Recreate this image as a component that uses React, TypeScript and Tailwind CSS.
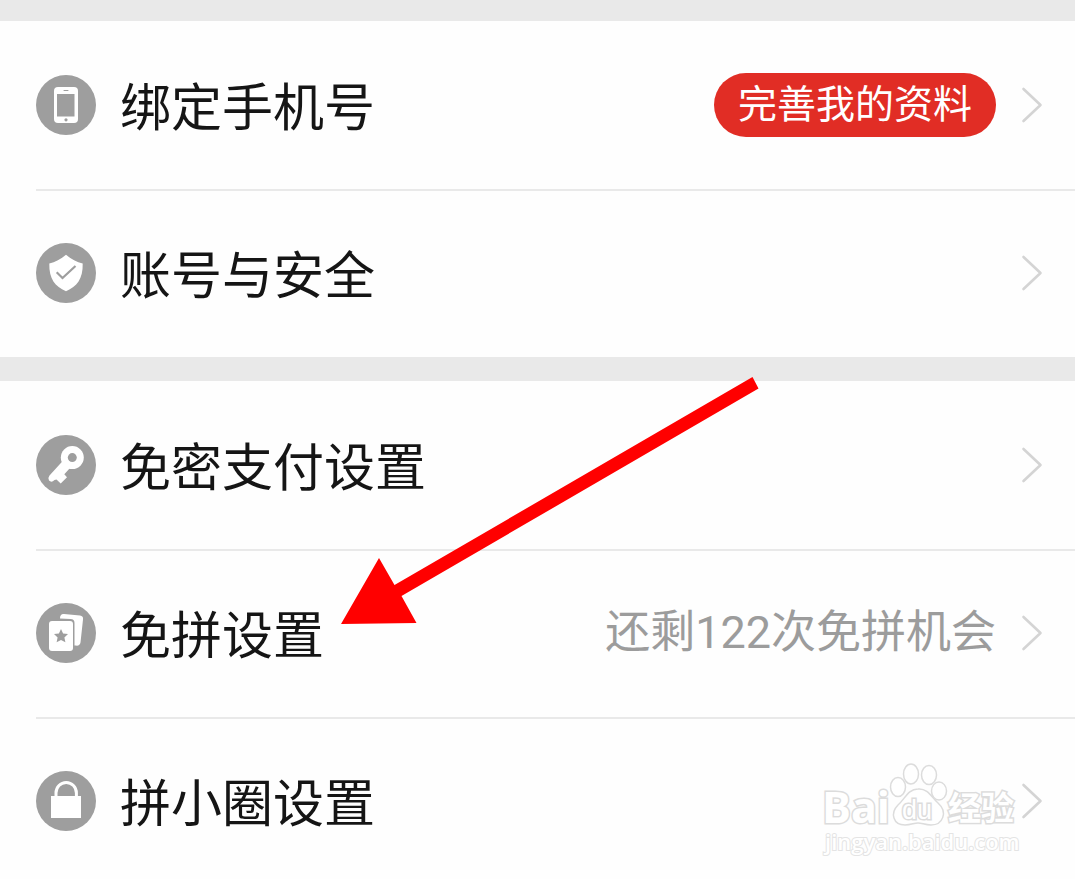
import type { ReactNode } from "react";

type Row = {
  label: string;
  icon: ReactNode;
  action?: string;
  note?: string;
};

const PhoneIcon = () => (
  <>
    <rect x="18" y="12" width="24" height="36" rx="4" fill="#fff" />
    <rect x="21" y="19" width="17.500" height="22.500" fill="#9e9e9e" />
    <path d="M28 15.500h4" stroke="#9e9e9e" strokeWidth="1" strokeLinecap="round" />
    <circle cx="30" cy="44.800" r="1.600" fill="#9e9e9e" />
  </>
);

const ShieldIcon = () => (
  <>
    <path
      d="M30 11.700C25 16 19 19 13.300 20.500C13 36 19 43.500 30 48.200C41 43.500 47 36 46.700 20.500C41 19 35 16 30 11.700Z"
      fill="#fff"
    />
    <path d="M20.700 29.300l5.800 5.700L39.500 23" fill="none" stroke="#9e9e9e" strokeWidth="2.200" />
  </>
);

const KeyIcon = () => (
  <>
    <path
      d="M26.700 26L13.500 40.500Q11.500 43 13 45.500Q15.500 48 18.500 45L20.500 44.500L24.700 48.500L31 42.300L28.300 39.300L34 33Z"
      fill="#fff"
    />
    <circle cx="36.300" cy="22.600" r="11.500" fill="#fff" />
    <circle cx="36.300" cy="22.600" r="4.500" fill="#9e9e9e" />
  </>
);

const CardsIcon = () => (
  <>
    <path
      d="M24 15.500Q24 10.600 28 11L44 12.600Q47.500 13 47 16.500L44.500 39.500Q44 43 40 42.600L38.500 42.500V20Q38.500 16 34.500 16Z"
      fill="#fff"
    />
    <rect x="13" y="18" width="24" height="30" rx="3" fill="#fff" />
    <path
      d="M25 26l2.100 4.500 4.900.6-3.600 3.300 1 4.900-4.400-2.400-4.400 2.400 1-4.900-3.600-3.300 4.900-.6z"
      fill="#9e9e9e"
    />
  </>
);

const LockIcon = () => (
  <>
    <rect x="15" y="25" width="30" height="22" fill="#fff" />
    <path d="M20 26v-4a10.200 10.500 0 0 1 20.400 0V26" fill="none" stroke="#fff" strokeWidth="3" />
  </>
);

const groups: Row[][] = [
  [
    { label: "绑定手机号", icon: <PhoneIcon />, action: "完善我的资料" },
    { label: "账号与安全", icon: <ShieldIcon /> },
  ],
  [
    { label: "免密支付设置", icon: <KeyIcon /> },
    { label: "免拼设置", icon: <CardsIcon />, note: "还剩122次免拼机会" },
    { label: "拼小圈设置", icon: <LockIcon /> },
  ],
];

function SettingRow({ label, icon, action, note }: Row) {
  return (
    <li className="flex h-[168px] items-center border-y-2 border-t-[#e9e9e9] border-b-transparent pr-[31px] first:border-t-transparent">
      <a href="#" className="flex flex-1 items-center gap-6">
        <svg viewBox="0 0 60 60" className="size-[60px] shrink-0" aria-hidden="true">
          <circle cx="30" cy="30" r="30" fill="#9e9e9e" />
          {icon}
        </svg>
        <span className="pt-2 text-[51px] leading-[60px] text-[#151515]">{label}</span>
      </a>
      {action && (
        <button
          type="button"
          className="h-16 rounded-full bg-[#e12d25] px-6 text-[39px] leading-[60px] text-white"
        >
          {action}
        </button>
      )}
      {note && <span className="text-[45px] leading-[60px] text-[#9c9c9c]">{note}</span>}
      <svg viewBox="0 0 24 40" className="ml-6 h-10 w-6 shrink-0" aria-hidden="true">
        <path
          d="M3.500 4L20.500 20L3.500 36"
          fill="none"
          stroke="#d4d4d4"
          strokeWidth="2.600"
          strokeLinecap="round"
          strokeLinejoin="round"
        />
      </svg>
    </li>
  );
}

function Arrow() {
  return (
    <svg
      viewBox="0 0 418 248"
      className="pointer-events-none absolute top-[377px] left-[341px] h-[248px] w-[418px]"
      aria-hidden="true"
    >
      <path d="M411.500 0L417.500 11.500L60.500 219L75.500 246L0 247L38 181L53.500 208Z" fill="#ff0000" />
    </svg>
  );
}

function Watermark() {
  return (
    <svg
      viewBox="0 0 200 100"
      className="pointer-events-none absolute top-[760px] right-[55px] h-[100px] w-[200px]"
      fill="#fff"
      stroke="#dcdcdc"
      strokeWidth="1.500"
      aria-label="Baidu 经验"
    >
      <text
        x="2"
        y="63"
        fontSize="43"
        fontWeight="700"
        strokeWidth="3"
        paintOrder="stroke"
        fontFamily="'Open Sans', sans-serif"
      >
        Bai
      </text>
      <ellipse cx="78" cy="27" rx="7.500" ry="9.500" />
      <ellipse cx="91" cy="14" rx="7.500" ry="10" />
      <ellipse cx="109" cy="15" rx="7.500" ry="9.500" />
      <ellipse cx="119" cy="31" rx="7.500" ry="9" />
      <path d="M98 29C108 28 112 38 118 43C128 52 123 65 111 65C105 65 102 63 98 63C94 63 91 65 85 65C73 65 70 53 78 45C85 39 88 29 98 29Z" />
      <text
        x="82"
        y="59"
        fontSize="27"
        paintOrder="stroke"
        strokeWidth="3"
        fontFamily="'Liberation Sans', sans-serif"
      >
        du
      </text>
      <text
        x="128"
        y="60"
        fontSize="33"
        fontWeight="700"
        strokeWidth="3"
        paintOrder="stroke"
        fontFamily="'Noto Sans CJK SC', sans-serif"
      >
        经验
      </text>
      <text
        x="5"
        y="90"
        fontSize="22"
        fontWeight="600"
        strokeWidth="2"
        stroke="#e4e4e4"
        paintOrder="stroke"
        fontFamily="'Open Sans', sans-serif"
      >
        jingyan.baidu.com
      </text>
    </svg>
  );
}

export default function App() {
  return (
    <main className="relative h-screen overflow-hidden bg-[#e9e9e9] pt-[21px] font-[Roboto,'Noto_Sans_CJK_SC',sans-serif]">
      <div className="flex flex-col gap-6">
        {groups.map((rows) => (
          <ul key={rows[0].label} className="bg-[#fefefe] pl-9">
            {rows.map((row) => (
              <SettingRow key={row.label} {...row} />
            ))}
          </ul>
        ))}
      </div>
      <Arrow />
      <Watermark />
    </main>
  );
}
